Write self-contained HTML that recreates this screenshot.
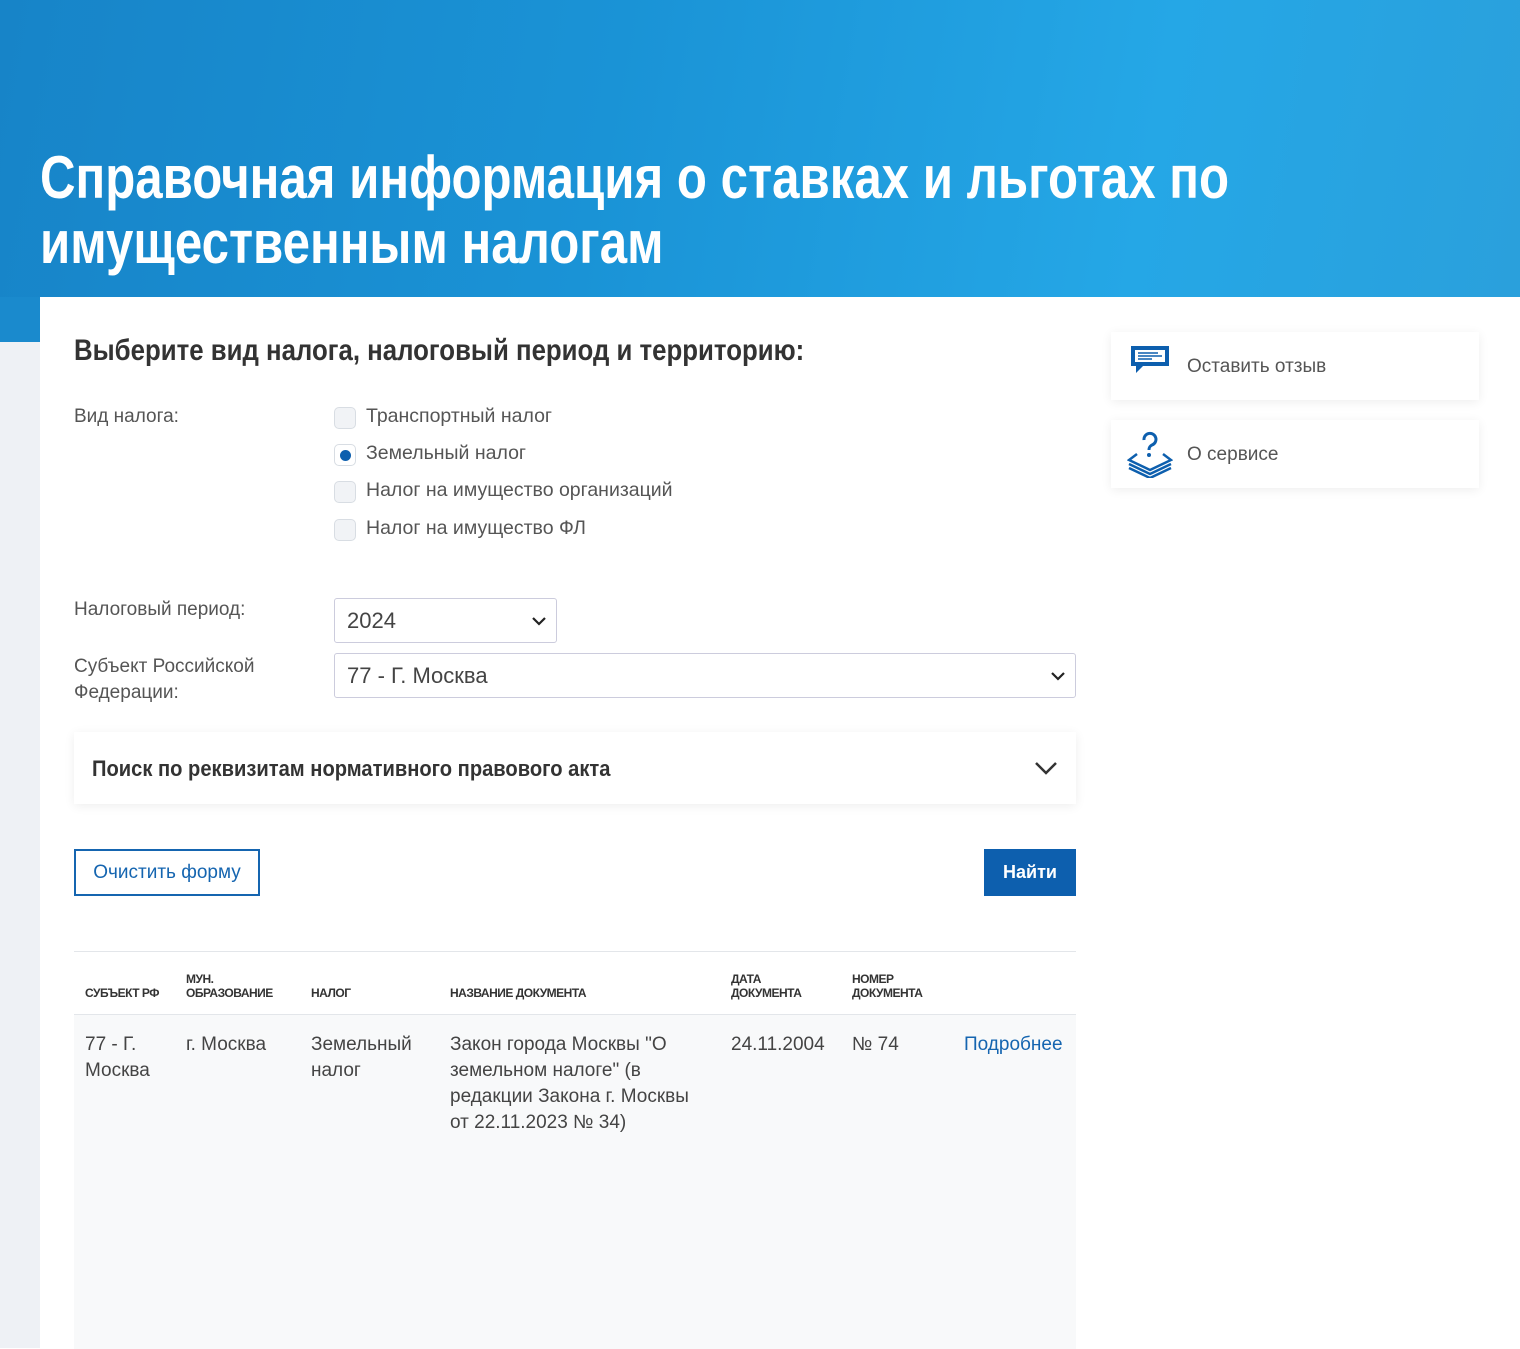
<!DOCTYPE html>
<html><head><meta charset="utf-8"><style>
*{margin:0;padding:0;box-sizing:border-box}
body{width:1520px;height:1348px;overflow:hidden;background:#fff;font-family:"Liberation Sans","DejaVu Sans",sans-serif;color:#333;position:relative}
.hdr{position:absolute;left:0;top:0;width:1520px;height:297px;background:linear-gradient(100deg,#1784c8 0%,#1a93d6 40%,#25a7e6 75%,#2aa0dc 100%)}
.strip{position:absolute;left:0;top:297px;width:40px;height:45px;background:#1a8acd}
.gut{position:absolute;left:0;top:342px;width:40px;height:1006px;background:#eef1f5}
h1{position:absolute;left:40px;top:145px;color:#fff;font-weight:bold;font-size:60px;line-height:65px;transform:scaleX(0.82);transform-origin:left top;white-space:nowrap}
.abs{position:absolute}
.h2{left:74px;top:334px;font-weight:bold;font-size:30px;color:#333;transform:scaleX(0.86);transform-origin:left top;white-space:nowrap}
.lbl{font-size:19px;color:#555}
.opt{font-size:19.5px;color:#555;left:366px}
.cb{left:334px;width:22px;height:22px;border:1px solid #d8dde3;border-radius:5px;background:#f1f3f6}
.sel{border:1px solid #ccd;border-radius:3px;background:#fff;font-size:22px;color:#444;padding-left:12px;line-height:44px}
.card{background:#fff;box-shadow:0 2px 10px rgba(0,0,0,.07)}
th{font-size:12px;font-weight:bold;color:#333;text-align:left;vertical-align:bottom;padding:0 0 14px 11px;letter-spacing:-0.5px}
td{font-size:19px;color:#444;vertical-align:top;padding:18px 0 0 11px;line-height:26px}
</style></head><body>
<div class="hdr"></div><div class="strip"></div><div class="gut"></div>
<h1>Справочная информация о ставках и льготах по<br>имущественным налогам</h1>
<div class="abs h2">Выберите вид налога, налоговый период и территорию:</div>
<div class="abs lbl" style="left:74px;top:406px">Вид налога:</div>
<div class="abs cb" style="top:407px"></div><div class="abs opt" style="top:405px">Транспортный налог</div>
<div class="abs cb" style="top:444px;background:#fff"><div style="position:absolute;left:5px;top:5px;width:11px;height:11px;border-radius:50%;background:#0d5fae"></div></div><div class="abs opt" style="top:442px">Земельный налог</div>
<div class="abs cb" style="top:481px"></div><div class="abs opt" style="top:479px">Налог на имущество организаций</div>
<div class="abs cb" style="top:519px"></div><div class="abs opt" style="top:517px">Налог на имущество ФЛ</div>
<div class="abs lbl" style="left:74px;top:599px">Налоговый период:</div>
<div class="abs sel" style="left:334px;top:598px;width:223px;height:45px">2024<svg style="position:absolute;right:10px;top:17px" width="14" height="10"><path d="M1 2l6 6 6-6" stroke="#222" stroke-width="2.2" fill="none"/></svg></div>
<div class="abs lbl" style="left:74px;top:654px;line-height:26px">Субъект Российской<br>Федерации:</div>
<div class="abs sel" style="left:334px;top:653px;width:742px;height:45px">77 - Г. Москва<svg style="position:absolute;right:10px;top:17px" width="14" height="10"><path d="M1 2l6 6 6-6" stroke="#222" stroke-width="2.2" fill="none"/></svg></div>
<div class="abs card" style="left:74px;top:732px;width:1002px;height:72px"><div style="position:absolute;left:18px;top:24px;font-weight:bold;font-size:22px;color:#333;transform:scaleX(0.915);transform-origin:left top;white-space:nowrap">Поиск по реквизитам нормативного правового акта</div><svg style="position:absolute;right:18px;top:28px" width="24" height="16"><path d="M2 3l10 10 10-10" stroke="#333" stroke-width="2.5" fill="none"/></svg></div>
<div class="abs" style="left:74px;top:849px;width:186px;height:47px;border:2px solid #1565b0;color:#1565b0;font-size:19px;text-align:center;line-height:43px">Очистить форму</div>
<div class="abs" style="left:984px;top:849px;width:92px;height:47px;background:#0d5fae;color:#fff;font-size:18px;font-weight:bold;text-align:center;line-height:47px">Найти</div>
<div class="abs" style="left:74px;top:951px;width:1002px;height:397px;border-top:1px solid #e3e6ea">
<div style="position:absolute;left:0;top:62px;width:1002px;height:335px;background:#f8f9fa;border-top:1px solid #e3e6ea"></div>
<table style="position:relative;border-collapse:collapse;width:1002px;table-layout:fixed">
<tr style="height:62px"><th style="width:101px">СУБЪЕКТ РФ</th><th style="width:125px">МУН.<br>ОБРАЗОВАНИЕ</th><th style="width:139px">НАЛОГ</th><th style="width:281px">НАЗВАНИЕ ДОКУМЕНТА</th><th style="width:121px">ДАТА<br>ДОКУМЕНТА</th><th style="width:112px">НОМЕР<br>ДОКУМЕНТА</th><th></th></tr>
<tr><td>77 - Г.<br>Москва</td><td>г. Москва</td><td>Земельный<br>налог</td><td style="padding-right:20px">Закон города Москвы "О земельном налоге" (в редакции Закона г. Москвы от 22.11.2023 № 34)</td><td>24.11.2004</td><td>№ 74</td><td style="color:#1565b0;white-space:nowrap">Подробнее</td></tr>
</table></div>
<div class="abs card" style="left:1111px;top:332px;width:368px;height:68px"><svg style="position:absolute;left:18px;top:12px" width="42" height="32" viewBox="0 0 42 32"><path d="M2 2h38v20H14l-7 7v-7H2z" fill="#0d5fae"/><rect x="6" y="6" width="30" height="12" fill="#fff"/><path d="M9 9h20M9 12h24M9 15h14" stroke="#0d5fae" stroke-width="1.5"/></svg><div style="position:absolute;left:76px;top:24px;font-size:19px;color:#555">Оставить отзыв</div></div>
<div class="abs card" style="left:1111px;top:420px;width:368px;height:68px"><svg style="position:absolute;left:16px;top:10px" width="46" height="48" viewBox="0 0 46 48"><path d="M17 10a6 6 0 1 1 8 5c-2 1-3 2-3 5" stroke="#0d5fae" stroke-width="3" fill="none"/><circle cx="22" cy="25" r="2" fill="#0d5fae"/><path d="M10 24l-8 6 21 10 21-10-8-6M2 34l21 10 21-10M2 38l21 10 21-10" stroke="#0d5fae" stroke-width="2.5" fill="none"/></svg><div style="position:absolute;left:76px;top:24px;font-size:19px;color:#555">О сервисе</div></div>
</body></html>
